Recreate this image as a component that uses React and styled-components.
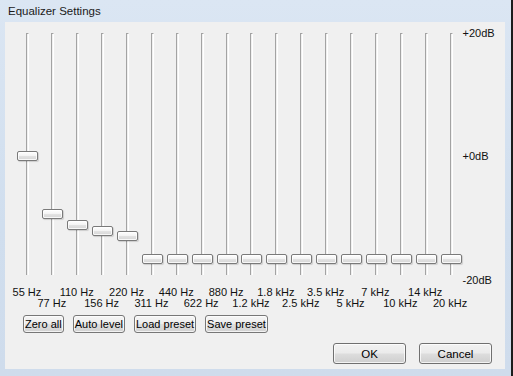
import styled, { createGlobalStyle } from 'styled-components';

const GlobalStyle = createGlobalStyle`
  html, body {
    margin: 0;
    padding: 0;
    background: #d3e0ef;
  }
  * { box-sizing: border-box; }
`;

const bands = [
  { label: '55 Hz', top: 117 },
  { label: '77 Hz', top: 175 },
  { label: '110 Hz', top: 186 },
  { label: '156 Hz', top: 192 },
  { label: '220 Hz', top: 197 },
  { label: '311 Hz', top: 220 },
  { label: '440 Hz', top: 220 },
  { label: '622 Hz', top: 220 },
  { label: '880 Hz', top: 220 },
  { label: '1.2 kHz', top: 220 },
  { label: '1.8 kHz', top: 220 },
  { label: '2.5 kHz', top: 220 },
  { label: '3.5 kHz', top: 220 },
  { label: '5 kHz', top: 220 },
  { label: '7 kHz', top: 220 },
  { label: '10 kHz', top: 220 },
  { label: '14 kHz', top: 220 },
  { label: '20 kHz', top: 220 },
];

export default function App() {
  return (
    <>
      <GlobalStyle />
      <Window>
        <TitleBar>Equalizer Settings</TitleBar>
        <Client>
          <EqRow>
            {bands.map((b, i) => (
              <SliderColumn key={b.label}>
                <Track>
                  <Thumb style={{ top: b.top }} />
                </Track>
                <FreqLabel $low={i % 2 === 1}>{b.label}</FreqLabel>
              </SliderColumn>
            ))}
            <DbScale>
              <span>+20dB</span>
              <span>+0dB</span>
              <span>-20dB</span>
            </DbScale>
          </EqRow>

          <PresetRow>
            <SmallButton>Zero all</SmallButton>
            <SmallButton>Auto level</SmallButton>
            <SmallButton>Load preset</SmallButton>
            <SmallButton>Save preset</SmallButton>
          </PresetRow>

          <Footer>
            <DialogButton>OK</DialogButton>
            <DialogButton>Cancel</DialogButton>
          </Footer>
        </Client>
      </Window>
    </>
  );
}

const Window = styled.div`
  width: 513px;
  height: 376px;
  display: flex;
  flex-direction: column;
  padding: 0 6px 7px 5px;
  background: linear-gradient(#dbe6f3, #d0deee 60%, #cfdcec);
  border-right: 2px solid #1c1c1c;
  font-family: "Liberation Sans", Arial, sans-serif;
  color: #000;
`;

const TitleBar = styled.div`
  height: 22px;
  display: flex;
  align-items: center;
  padding-left: 3px;
  padding-bottom: 1px;
  font-size: 11.5px;
  color: #1a1a1a;
`;

const Client = styled.div`
  flex: 1;
  background: #f0f0f0;
  display: flex;
  flex-direction: column;
  padding-top: 11px;
`;

const EqRow = styled.div`
  display: flex;
  align-items: flex-start;
  padding-left: 9.5px;
`;

const SliderColumn = styled.div`
  width: 24.9px;
  display: flex;
  flex-direction: column;
  align-items: center;
`;

const Track = styled.div`
  position: relative;
  width: 3px;
  height: 242px;
  margin-left: 2px;
  border-left: 1px solid #a3a3a3;
  border-top: 1px solid #a3a3a3;
  border-right: 1px solid #ffffff;
`;

const Thumb = styled.div`
  position: absolute;
  left: -10px;
  width: 21px;
  height: 10px;
  border: 1px solid #7a7a7a;
  border-radius: 2px;
  background: linear-gradient(#ffffff, #f4f4f4 45%, #e2e2e2 55%, #d6d6d6);
  box-shadow: inset 0 0 0 1px rgba(255, 255, 255, 0.8), 1px 1px 1px rgba(0, 0, 0, 0.15);
`;

const FreqLabel = styled.span`
  margin-top: ${p => (p.$low ? '22px' : '10.5px')};
  font-size: 11px;
  line-height: 13px;
  white-space: nowrap;
  color: #111;
`;

const DbScale = styled.div`
  margin-top: -6.4px;
  height: 260px;
  display: flex;
  flex-direction: column;
  justify-content: space-between;
  font-size: 11px;
  line-height: 13px;
  color: #111;
`;

const PresetRow = styled.div`
  display: flex;
  gap: 9px;
  margin-top: 5px;
  padding-left: 18px;
`;

const SmallButton = styled.button`
  height: 18px;
  padding: 0 1px;
  font-family: inherit;
  font-size: 11px;
  color: #000;
  border: 1px solid #777;
  border-radius: 3px;
  background: linear-gradient(#f6f6f6, #ececec 48%, #dedede 52%, #d2d2d2);
  box-shadow: inset 0 0 0 1px rgba(255, 255, 255, 0.7);
`;

const Footer = styled.div`
  display: flex;
  justify-content: flex-end;
  gap: 13px;
  margin-top: 10px;
  padding-right: 13px;
`;

const DialogButton = styled.button`
  width: 73px;
  height: 21px;
  font-family: inherit;
  font-size: 11.5px;
  color: #000;
  border: 1px solid #707070;
  border-radius: 3px;
  background: linear-gradient(#f2f2f2, #ebebeb 48%, #dddddd 52%, #cfcfcf);
  box-shadow: inset 0 0 0 1px rgba(255, 255, 255, 0.75);
`;
